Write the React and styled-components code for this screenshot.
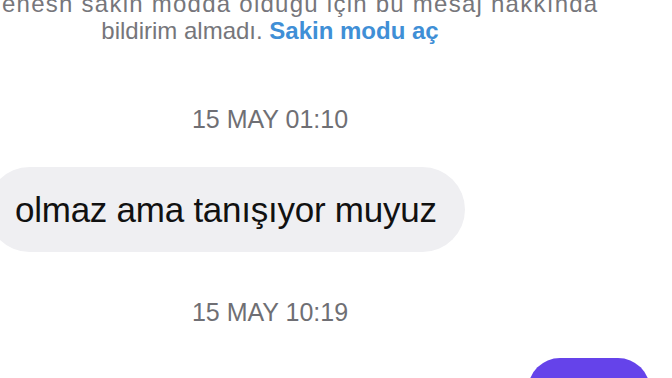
import React from 'react';
import styled, { createGlobalStyle } from 'styled-components';

const GlobalStyle = createGlobalStyle`
    html, body {
        margin: 0;
        padding: 0;
        background: #ffffff;
        overflow: hidden;
    }
    body {
        font-family: "Liberation Sans", Arial, sans-serif;
        -webkit-font-smoothing: antialiased;
    }
`;

const Screen = styled.div`
    width: 672px;
    height: 378px;
    overflow: hidden;
    display: flex;
    flex-direction: column;
`;

const Notice = styled.div`
    width: 540px;
    margin-top: -10px;
    display: flex;
    flex-direction: column;
    font-size: 24px;
    line-height: 27px;
    color: #76767b;
`;

const NoticeLine = styled.div`
    white-space: nowrap;
    text-align: ${(p) => (p.$lead ? 'left' : 'center')};
    padding-left: ${(p) => (p.$lead ? '2px' : '0')};
    letter-spacing: ${(p) => (p.$lead ? '1.25px' : '0')};
`;

const Link = styled.span`
    color: #3f8fd6;
    font-weight: 600;
`;

const Stamp = styled.div`
    width: 540px;
    text-align: center;
    font-size: 25px;
    line-height: 28px;
    color: #6f6f74;
    margin: ${(p) => p.$gap || '0'};
`;

const Row = styled.div`
    display: flex;
    justify-content: ${(p) => (p.$out ? 'flex-end' : 'flex-start')};
    padding-right: ${(p) => (p.$out ? '22px' : '0')};
`;

const Bubble = styled.div`
    margin-left: -13px;
    padding: 22px 28px;
    border-radius: 43px;
    background: #efeff2;
    color: #111111;
    font-size: 35px;
    line-height: 41px;
    letter-spacing: -0.25px;
    white-space: nowrap;
`;

const OutBubble = styled.div`
    width: 122px;
    height: 64px;
    border-radius: 32px;
    background: #6543ea;
`;

export default function App() {
    return (
        <>
            <GlobalStyle />
            <Screen>
                <Notice>
                    <NoticeLine $lead>enesh sakin modda olduğu için bu mesaj hakkında</NoticeLine>
                    <NoticeLine>
                        bildirim almadı. <Link>Sakin modu aç</Link>
                    </NoticeLine>
                </Notice>
                <Stamp $gap="61px 0 34px">15 MAY 01:10</Stamp>
                <Row>
                    <Bubble>olmaz ama tanışıyor muyuz</Bubble>
                </Row>
                <Stamp $gap="46px 0 32px">15 MAY 10:19</Stamp>
                <Row $out>
                    <OutBubble />
                </Row>
            </Screen>
        </>
    );
}
